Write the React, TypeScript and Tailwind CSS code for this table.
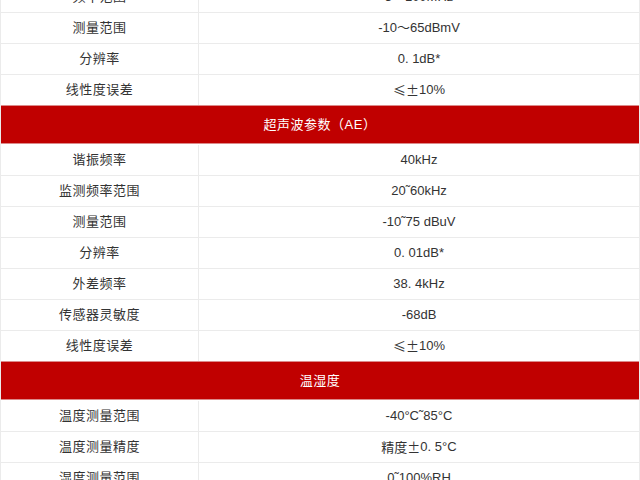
import type { ReactNode } from "react";

type Row = { kind: "row"; label: string; value: ReactNode } | { kind: "head"; title: string };

const cjk = (s: string) => <span style={{ fontFamily: '"Noto Sans CJK SC", sans-serif' }}>{s}</span>;

const rows: Row[] = [
  { kind: "row", label: "频率范围", value: "3～100MHz" },
  { kind: "row", label: "测量范围", value: "-10～65dBmV" },
  { kind: "row", label: "分辨率", value: "0. 1dB*" },
  { kind: "row", label: "线性度误差", value: <>{cjk("≤±")}10%</> },
  { kind: "head", title: "超声波参数（AE）" },
  { kind: "row", label: "谐振频率", value: "40kHz" },
  { kind: "row", label: "监测频率范围", value: "20˜60kHz" },
  { kind: "row", label: "测量范围", value: "-10˜75 dBuV" },
  { kind: "row", label: "分辨率", value: "0. 01dB*" },
  { kind: "row", label: "外差频率", value: "38. 4kHz" },
  { kind: "row", label: "传感器灵敏度", value: "-68dB" },
  { kind: "row", label: "线性度误差", value: <>{cjk("≤±")}10%</> },
  { kind: "head", title: "温湿度" },
  { kind: "row", label: "温度测量范围", value: "-40°C˜85°C" },
  { kind: "row", label: "温度测量精度", value: <>{cjk("精度±")}0. 5°C</> },
  { kind: "row", label: "湿度测量范围", value: "0˜100%RH" },
  { kind: "row", label: "湿度测量精度", value: <>{cjk("±")}3%RH</> },
];

export default function App() {
  return (
    <div className="w-[640px] h-[480px] overflow-hidden bg-white">
      <div
        className="-mt-[19px] border-x border-[#ebebeb] text-[13px] text-[#333]"
        style={{ fontFamily: '"Liberation Sans", "Noto Sans CJK SC", sans-serif' }}
      >
        {rows.map((r, i) => {
          if (r.kind === "head") {
            return (
              <div
                key={i}
                className="h-[39px] flex items-center justify-center bg-[#c00000] border-y border-[#dc8a8a] text-white tracking-[0.5px]"
              >
                {r.title}
              </div>
            );
          }
          const afterHead = i > 0 && rows[i - 1].kind === "head";
          return (
            <div key={i} className={`flex h-[31px] ${afterHead ? "pt-px" : "border-t border-[#ebebeb]"}`}>
              <div className="w-[198px] border-r border-[#ebebeb] flex items-center justify-center tracking-[0.5px]">
                {r.label}
              </div>
              <div className="flex-1 flex items-center justify-center">{r.value}</div>
            </div>
          );
        })}
      </div>
    </div>
  );
}
